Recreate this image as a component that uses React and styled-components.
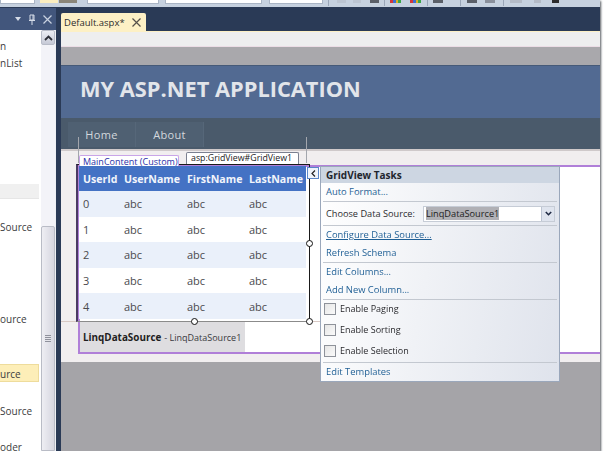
import React from "react";
import styled, { createGlobalStyle } from "styled-components";

const GlobalStyle = createGlobalStyle`
  html, body {
    margin: 0;
    padding: 0;
    background: #ffffff;
  }
  body {
    font-family: "Open Sans", "Noto Sans", sans-serif;
  }
`;

const toolSegments = [
  { kind: "field", width: 33, gap: 0 },
  { kind: "active", width: 18, gap: 5 },
  { kind: "active", width: 18, gap: 1, mark: "#8a8578" },
  { kind: "field", width: 70, gap: 10 },
  { kind: "field", width: 95, gap: 6 },
  { kind: "field", width: 52, gap: 7 },
  { kind: "sep", width: 1, gap: 5 },
  { kind: "tick", width: 9, gap: 8, mark: "#bcc5d2" },
  { kind: "tick", width: 8, gap: 7, mark: "#bcc5d2" },
  { kind: "tick", width: 9, gap: 9, mark: "#5a5f68" },
  { kind: "sep", width: 1, gap: 5 },
  { kind: "colors", width: 11, gap: 5 },
  { kind: "colors", width: 11, gap: 9 },
  { kind: "sep", width: 1, gap: 6 },
  { kind: "tick", width: 10, gap: 5, mark: "#5a5f68" },
  { kind: "sep", width: 1, gap: 17 },
  { kind: "tick", width: 10, gap: 6, mark: "#5a5f68" },
  { kind: "tick", width: 10, gap: 8, mark: "#8a909c" },
  { kind: "sep", width: 1, gap: 8 },
  { kind: "tick", width: 12, gap: 6, mark: "#b4bbc7" },
  { kind: "tick", width: 7, gap: 12, mark: "#b4bbc7" },
  { kind: "tick", width: 7, gap: 11, mark: "#2c2c2c" }
];

const toolItems = [
  { label: "n", height: 17, top: 8 },
  { label: "nList", height: 17, top: 0 },
  { label: "", height: 14, top: 112, tone: "group" },
  { label: "Source", height: 16, top: 20 },
  { label: "ource", height: 16, top: 76 },
  { label: "urce", height: 18, top: 37, tone: "selected" },
  { label: "Source", height: 16, top: 21 },
  { label: "oder", height: 16, top: 20 }
];

const columns = ["UserId", "UserName", "FirstName", "LastName"];
const rows = [0, 1, 2, 3, 4];

const App = () => (
  <>
    <GlobalStyle />
    <Frame>
      <Toolbar>
        {toolSegments.map((segment, i) => (
          <ToolSegment key={i} $kind={segment.kind} $width={segment.width} $gap={segment.gap} $mark={segment.mark} />
        ))}
      </Toolbar>
      <Workspace>
        <SidePanel>
          <PanelHeader>
            <svg width="6" height="4" viewBox="0 0 6 4">
              <path d="M0 0h6L3 4z" fill="#d5dce8" />
            </svg>
            <svg width="8" height="11" viewBox="0 0 8 11">
              <path d="M2 1h4v5H2zM1 6.5h6M4 7v4M5 1v5" fill="none" stroke="#d5dce8" strokeWidth="1" />
            </svg>
            <svg width="9" height="9" viewBox="0 0 9 9">
              <path d="M.5.5l8 8M8.5.5l-8 8" stroke="#c9d2e0" strokeWidth="1.2" />
            </svg>
          </PanelHeader>
          <PanelBody>
            <ToolList>
              {toolItems.map((item, i) => (
                <ToolItem key={i} $height={item.height} $top={item.top} $tone={item.tone}>
                  {item.label}
                </ToolItem>
              ))}
            </ToolList>
            <Scrollbar>
              <ScrollButton>
                <svg width="9" height="6" viewBox="0 0 9 6">
                  <path d="M1 5l3.5-3.5L8 5" fill="none" stroke="#2d2f38" strokeWidth="1.8" />
                </svg>
              </ScrollButton>
              <ScrollThumb>
                <Grip />
              </ScrollThumb>
            </Scrollbar>
          </PanelBody>
        </SidePanel>
        <Document>
          <TabStrip>
            <Tab>
              <span>Default.aspx*</span>
              <svg width="9" height="9" viewBox="0 0 9 9">
                <path d="M.5.5l8 8M8.5.5l-8 8" stroke="#55504a" strokeWidth="1.2" />
              </svg>
            </Tab>
          </TabStrip>
          <RulerBar />
          <GreyBand />
          <SiteHeader>MY ASP.NET APPLICATION</SiteHeader>
          <SiteNav>
            <NavItem>Home</NavItem>
            <NavItem>About</NavItem>
          </SiteNav>
          <DesignArea>
            <Guide $left={17} $top={-14} $height={26} />
            <Guide $left={245} $top={-14} $height={26} />
            <GuideLine $left={0} $top={170} $width={17} />
            <GuideLine $left={248} $top={170} $width={12} />
            <ContentPanel>
              <GridShell>
                <MainTag>MainContent (Custom)</MainTag>
                <GridTag>asp:GridView#GridView1</GridTag>
                <GridTable>
                  <HeaderRow>
                    {columns.map(col => (
                      <HeaderCell key={col}>{col}</HeaderCell>
                    ))}
                  </HeaderRow>
                  {rows.map(row => (
                    <DataRow key={row} $alt={row % 2 === 0}>
                      <DataCell>{row}</DataCell>
                      <DataCell>abc</DataCell>
                      <DataCell>abc</DataCell>
                      <DataCell>abc</DataCell>
                    </DataRow>
                  ))}
                </GridTable>
                <Handle $x="100%" $y="50%" />
                <Handle $x="50%" $y="100%" />
                <Handle $x="100%" $y="100%" />
              </GridShell>
              <SourceBox>
                <b>LinqDataSource</b> - LinqDataSource1
              </SourceBox>
            </ContentPanel>
            <TaskArrow>
              <svg width="5" height="7" viewBox="0 0 5 7">
                <path d="M4 .5L1 3.5l3 3" fill="none" stroke="#222" strokeWidth="1.2" />
              </svg>
            </TaskArrow>
            <TaskPanel>
              <TaskTitle>GridView Tasks</TaskTitle>
              <TaskGroup>
                <TaskLink>Auto Format...</TaskLink>
              </TaskGroup>
              <TaskGroup>
                <SourceRow>
                  <span>Choose Data Source:</span>
                  <SourceSelect>
                    <Selected>LinqDataSource1</Selected>
                    <SelectArrow>
                      <svg width="7" height="5" viewBox="0 0 7 5">
                        <path d="M.8 1l2.7 2.7L6.2 1" fill="none" stroke="#1f2a44" strokeWidth="1.6" />
                      </svg>
                    </SelectArrow>
                  </SourceSelect>
                </SourceRow>
              </TaskGroup>
              <TaskGroup>
                <TaskLink $underline>Configure Data Source...</TaskLink>
                <TaskLink>Refresh Schema</TaskLink>
              </TaskGroup>
              <EditGroup>
                <TaskLink>Edit Columns...</TaskLink>
                <TaskLink>Add New Column...</TaskLink>
              </EditGroup>
              <CheckGroup>
                <CheckRow>
                  <CheckBox />
                  Enable Paging
                </CheckRow>
                <CheckRow>
                  <CheckBox />
                  Enable Sorting
                </CheckRow>
                <CheckRow>
                  <CheckBox />
                  Enable Selection
                </CheckRow>
              </CheckGroup>
              <TaskFooter>
                <TaskLink>Edit Templates</TaskLink>
              </TaskFooter>
            </TaskPanel>
          </DesignArea>
          <BottomBand />
        </Document>
      </Workspace>
    </Frame>
  </>
);

const Frame = styled.div`
  width: 600px;
  height: 451px;
  display: flex;
  flex-direction: column;
  overflow: hidden;
  background: #2a3a56;
  box-shadow: 1px 1px 2px #555a60;
  filter: blur(0.45px);
`;

const Toolbar = styled.div`
  height: 7px;
  flex: none;
  display: flex;
  align-items: flex-start;
  background: #c6d1df;
`;

const segmentBackground = {
  field: "#ffffff",
  active: "#fbeec0",
  sep: "#9aa6b8",
  colors: "linear-gradient(90deg, #d23a3a 25%, #3f6fd0 25% 50%, #e0b020 50% 75%, #3aa64a 75%)",
  tick: "transparent"
};

const ToolSegment = styled.div`
  position: relative;
  flex: none;
  width: ${p => p.$width}px;
  margin-left: ${p => p.$gap}px;
  height: ${p => (p.$kind === "sep" ? 6 : 3)}px;
  background: ${p => segmentBackground[p.$kind]};
  border: ${p => (p.$kind === "field" ? "1px solid #aab5c5" : "none")};
  border-top: none;
  box-sizing: content-box;
  ${p => p.$mark && `box-shadow: inset 0 -3px 0 ${p.$mark};`}
`;

const Workspace = styled.div`
  flex: 1;
  min-height: 0;
  display: flex;
  gap: 5px;
`;

const SidePanel = styled.div`
  width: 56px;
  flex: none;
  display: flex;
  flex-direction: column;
`;

const PanelHeader = styled.div`
  height: 22px;
  margin-top: 1px;
  flex: none;
  display: flex;
  align-items: center;
  justify-content: flex-end;
  gap: 7px;
  padding-right: 4px;
  box-sizing: border-box;
  background: #42567c;
`;

const PanelBody = styled.div`
  flex: 1;
  min-height: 0;
  display: flex;
  background: #ffffff;
`;

const ToolList = styled.div`
  width: 39px;
  flex: none;
  display: flex;
  flex-direction: column;
  font-size: 10px;
  color: #3c3c40;
`;

const toolTone = {
  group: "background: #f0f0f0; border-bottom: 1px solid #e6e6e6;",
  selected: "background: #fdeeb8; border: 1px solid #eedc9c; border-left: none; box-sizing: border-box;"
};

const ToolItem = styled.div`
  flex: none;
  height: ${p => p.$height}px;
  margin-top: ${p => p.$top}px;
  line-height: ${p => p.$height}px;
  white-space: nowrap;
  ${p => toolTone[p.$tone] || ""}
`;

const Scrollbar = styled.div`
  width: 15px;
  margin-left: 2px;
  flex: none;
  display: flex;
  flex-direction: column;
  background: #f3f3f8;
  border-right: 1px solid #eef0f4;
  box-sizing: border-box;
`;

const ScrollButton = styled.div`
  height: 15px;
  margin-bottom: 181px;
  flex: none;
  display: flex;
  align-items: center;
  justify-content: center;
  background: linear-gradient(#eceef4, #c6c9d6);
  border: 1px solid #b8bcc8;
  border-radius: 2px;
  box-sizing: border-box;
`;

const ScrollThumb = styled.div`
  flex: 1;
  display: flex;
  align-items: center;
  justify-content: center;
  background: linear-gradient(90deg, #eeeef3, #d6d6e0);
  border: 1px solid #b9bcc6;
  border-radius: 2px 2px 0 0;
  box-sizing: border-box;
`;

const Grip = styled.div`
  width: 6px;
  height: 7px;
  background: repeating-linear-gradient(#8f919c 0 1px, #e4e4ea 1px 2px);
`;

const Document = styled.div`
  flex: 1;
  min-width: 0;
  display: flex;
  flex-direction: column;
`;

const TabStrip = styled.div`
  height: 24px;
  flex: none;
  display: flex;
  align-items: flex-end;
`;

const Tab = styled.div`
  width: 85px;
  height: 18px;
  display: flex;
  align-items: center;
  justify-content: space-between;
  padding: 0 5px 0 3px;
  box-sizing: border-box;
  background: #fdf0c5;
  border-radius: 2px 2px 0 0;
  font-size: 9.5px;
  color: #2c2c2c;
`;

const RulerBar = styled.div`
  height: 16px;
  flex: none;
  background: #eeeeef;
  border-top: 1px solid #fdf0c5;
  border-bottom: 1px solid #ecdde6;
  box-sizing: border-box;
`;

const GreyBand = styled.div`
  height: 18px;
  flex: none;
  background: #a9a8ac;
`;

const SiteHeader = styled.div`
  height: 53px;
  flex: none;
  display: flex;
  align-items: center;
  padding: 0 0 7px 19px;
  box-sizing: border-box;
  background: #526a92;
  border-top: 1px solid #465a78;
  font-size: 21.8px;
  font-weight: 700;
  color: #e2e5ea;
`;

const SiteNav = styled.div`
  height: 31px;
  flex: none;
  display: flex;
  align-items: flex-start;
  padding: 4px 0 0 7px;
  box-sizing: border-box;
  background: #4a5a6b;
`;

const NavItem = styled.div`
  width: 68px;
  height: 25px;
  display: flex;
  align-items: center;
  justify-content: center;
  box-sizing: border-box;
  background: #4f6072;
  border-right: 1px solid #566779;
  font-size: 11px;
  letter-spacing: 0.3px;
  color: #d3d8dd;
`;

const DesignArea = styled.div`
  position: relative;
  height: 213px;
  flex: none;
  padding: 14px 0 8px 17px;
  box-sizing: border-box;
  background: #f1eeef;
  border-top: 2px solid #cfc9ca;
`;

const Guide = styled.div`
  position: absolute;
  left: ${p => p.$left}px;
  top: ${p => p.$top}px;
  width: 1px;
  height: ${p => p.$height}px;
  background: #a3a6ad;
`;

const GuideLine = styled.div`
  position: absolute;
  left: ${p => p.$left}px;
  top: ${p => p.$top}px;
  width: ${p => p.$width}px;
  height: 1px;
  background: #d8c9c4;
`;

const ContentPanel = styled.div`
  height: 100%;
  background: #ffffff;
  border: 2px solid #b07fd8;
  border-right: none;
  box-sizing: border-box;
`;

const GridShell = styled.div`
  position: relative;
  width: 234px;
  height: 158px;
  margin: -3px 0 0 -4px;
  border: 1px solid #1a1a1a;
  border-left: 2px solid #4a3a62;
  border-bottom: 1px solid #8b8b8b;
  box-sizing: border-box;
`;

const MainTag = styled.div`
  position: absolute;
  left: 1px;
  top: -10px;
  width: 100px;
  height: 11px;
  box-sizing: border-box;
  background: #ffffff;
  border: 1px solid #c9a5e8;
  border-bottom: none;
  border-radius: 2px 2px 0 0;
  font-size: 9px;
  line-height: 11px;
  padding-left: 3px;
  color: #2a2fa8;
  white-space: nowrap;
`;

const GridTag = styled.div`
  position: absolute;
  left: 108px;
  top: -13px;
  width: 113px;
  height: 12px;
  box-sizing: border-box;
  background: #ffffff;
  border: 1px solid #7b8090;
  border-bottom: none;
  border-radius: 2px 2px 0 0;
  font-size: 8.8px;
  line-height: 11px;
  padding-left: 4px;
  color: #222222;
  white-space: nowrap;
`;

const GridTable = styled.div`
  width: 227px;
  margin: 1px 0 0 1px;
  display: flex;
  flex-direction: column;
`;

const gridColumns = "41px 63px 62px 61px";

const HeaderRow = styled.div`
  height: 25px;
  display: grid;
  grid-template-columns: ${gridColumns};
  align-items: center;
  background: #4472c4;
`;

const HeaderCell = styled.div`
  padding-left: 4px;
  font-size: 10.6px;
  font-weight: 700;
  color: #f2f5fb;
  white-space: nowrap;
`;

const DataRow = styled.div`
  height: 25.6px;
  display: grid;
  grid-template-columns: ${gridColumns};
  align-items: center;
  background: ${p => (p.$alt ? "#eaf0fa" : "#ffffff")};
`;

const DataCell = styled.div`
  padding-left: 4px;
  font-size: 11px;
  color: #4a4a4e;
`;

const Handle = styled.div`
  position: absolute;
  left: ${p => p.$x};
  top: ${p => p.$y};
  width: 7px;
  height: 7px;
  margin: -3px 0 0 -3px;
  box-sizing: border-box;
  background: #ffffff;
  border: 1px solid #111111;
  border-radius: 50%;
`;

const SourceBox = styled.div`
  width: 165px;
  height: 30px;
  display: flex;
  align-items: center;
  gap: 3px;
  padding-left: 3px;
  box-sizing: border-box;
  background: #dedde0;
  font-size: 9px;
  color: #3a3a3e;
  white-space: nowrap;

  b {
    font-size: 9.9px;
    color: #1e1e22;
  }
`;

const TaskArrow = styled.div`
  position: absolute;
  left: 246px;
  top: 16px;
  width: 12px;
  height: 12px;
  display: flex;
  align-items: center;
  justify-content: center;
  box-sizing: border-box;
  background: #eef3fb;
  border: 1px solid #5b86c8;
`;

const TaskPanel = styled.div`
  position: absolute;
  left: 259px;
  top: 15px;
  width: 240px;
  height: 216px;
  box-sizing: border-box;
  border: 1px solid #9aa7bb;
  background: linear-gradient(100deg, #ffffff 0%, #f0f2f6 45%, #dfe3ec 100%);
  font-size: 9.4px;
  color: #2c2c30;
  display: flex;
  flex-direction: column;
`;

const TaskTitle = styled.div`
  height: 16px;
  flex: none;
  padding-left: 5px;
  background: #cdd6e2;
  font-size: 10px;
  font-weight: 700;
  line-height: 16px;
  color: #22262e;
`;

const TaskGroup = styled.div`
  flex: none;
  margin: 0 2px;
  padding: 0 0 0 3px;
  border-bottom: 1px solid #c3c8d0;
  display: flex;
  flex-direction: column;
`;

const EditGroup = styled(TaskGroup)`
  margin-bottom: -1px;
`;

const TaskLink = styled.div`
  height: 18px;
  line-height: 18px;
  color: #1f5f95;
  text-decoration: ${p => (p.$underline ? "underline" : "none")};
`;

const SourceRow = styled.div`
  height: 23px;
  display: flex;
  align-items: center;
  justify-content: space-between;
  padding-right: 2px;
  font-size: 9.2px;
`;

const SourceSelect = styled.div`
  width: 132px;
  height: 16px;
  display: flex;
  align-items: center;
  justify-content: space-between;
  box-sizing: border-box;
  background: #ffffff;
  border: 1px solid #c6ccd6;
  padding-left: 2px;
`;

const Selected = styled.span`
  background: #b0b0b5;
  color: #222222;
  line-height: 13px;
`;

const SelectArrow = styled.span`
  width: 12px;
  height: 14px;
  display: flex;
  align-items: center;
  justify-content: center;
  background: #dfe4ee;
  border-left: 1px solid #bcc4d2;
`;

const CheckGroup = styled.div`
  flex: none;
  margin: -1px 2px 0;
  padding: 0 0 1px 1px;
  border-bottom: 1px solid #c3c8d0;
  display: flex;
  flex-direction: column;
`;

const CheckRow = styled.div`
  height: 21px;
  display: flex;
  align-items: center;
  gap: 4px;
  font-size: 9px;
  color: #2a2a2e;
`;

const CheckBox = styled.span`
  width: 12px;
  height: 12px;
  flex: none;
  box-sizing: border-box;
  background: linear-gradient(135deg, #e6e6e6, #fafafa);
  border: 1px solid #8e929a;
`;

const TaskFooter = styled.div`
  flex: none;
  padding-left: 5px;
`;

const BottomBand = styled.div`
  flex: 1;
  background: #a5a4a8;
`;

export default App;
